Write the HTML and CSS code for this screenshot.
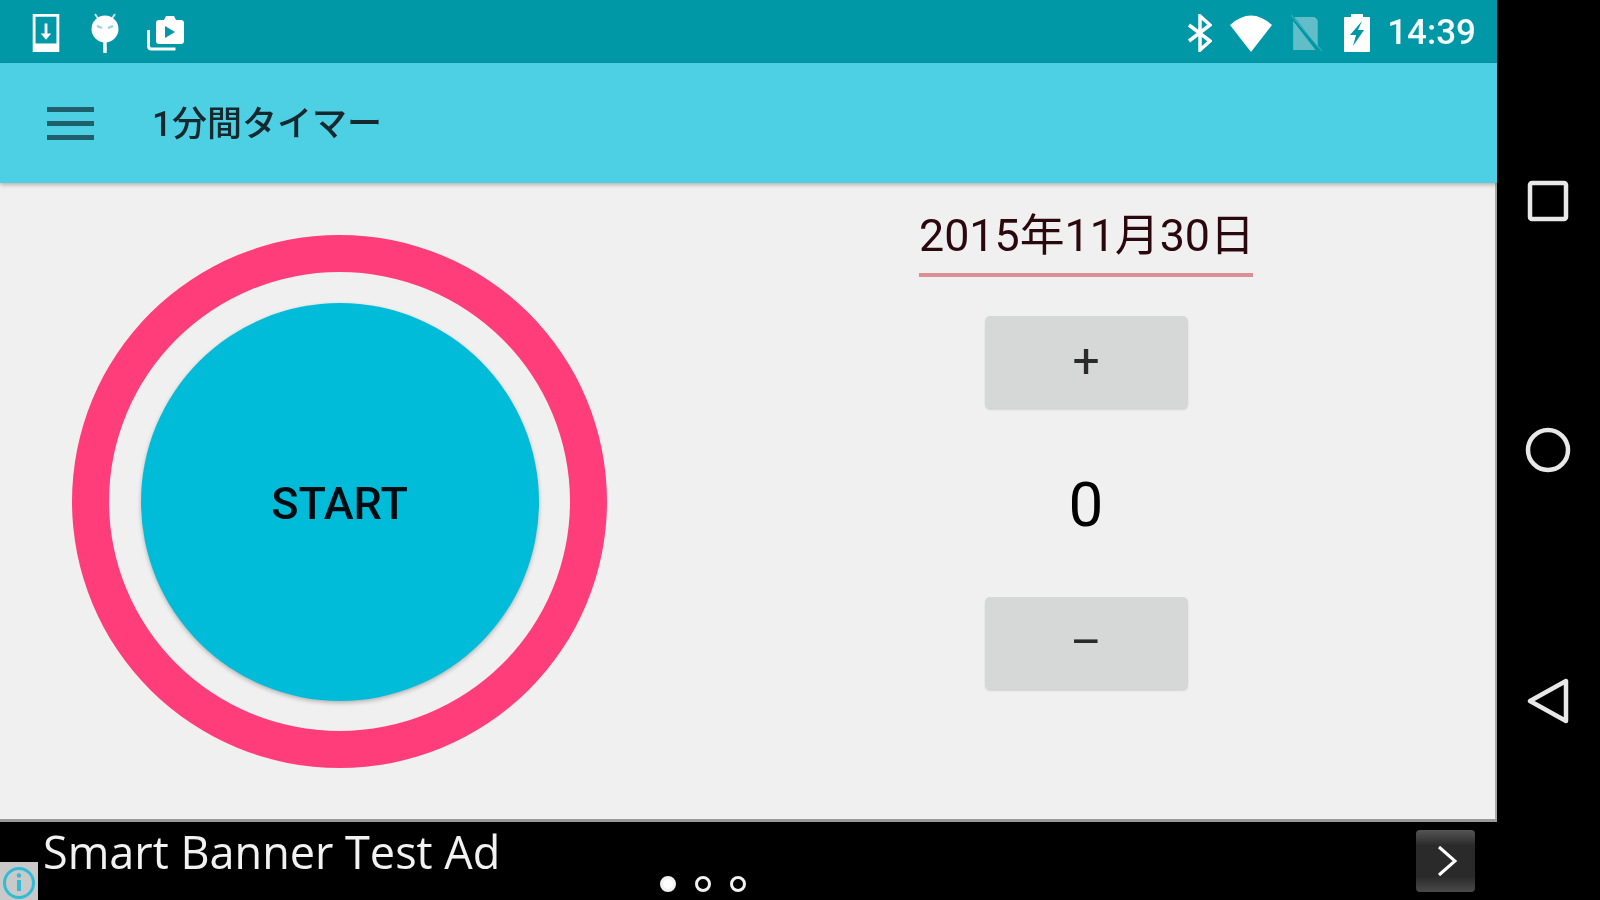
FILE: index.html
```html
<!DOCTYPE html>
<html lang="ja">
<head>
    <meta charset="UTF-8">
    <meta name="viewport" content="width=device-width, initial-scale=1.0">
    <title>1分間タイマー</title>
    <link rel="stylesheet" href="styles.css">
</head>
<body>
    <div class="device">
        <div class="screen">
            <div class="status-bar">
                <div class="status-left">
                    <svg class="icon-download" viewBox="0 0 28 40">
                        <path d="M1.500 1.500h25v37h-25z" fill="none" stroke="#fff" stroke-width="3"/>
                        <path d="M1 31h26v8H1z" fill="#fff"/>
                        <path d="M14 10v13" stroke="#fff" stroke-width="3"/>
                        <path d="M8.500 20.500h11L14 27z" fill="#fff"/>
                    </svg>
                    <svg class="icon-android" viewBox="0 0 28 40">
                        <path d="M4 1l4 6M24 1l-4 6" stroke="#fff" stroke-width="2" opacity=".75"/>
                        <circle cx="14" cy="16" r="13.500" fill="#fff"/>
                        <path d="M14 28v11" stroke="#fff" stroke-width="3.500" stroke-linecap="round"/>
                        <path d="M6 13l5 2M22 13l-5 2" stroke="#8fd3da" stroke-width="2"/>
                    </svg>
                    <svg class="icon-video" viewBox="0 0 38 36">
                        <path d="M1.500 15v16q0 3 3 3h24" fill="none" stroke="#fff" stroke-width="3"/>
                        <path d="M9 8q0-3 3-3h5l2-4h8l2 4h5q3 0 3 3v18q0 3-3 3H12q-3 0-3-3z" fill="#fff"/>
                        <path d="M18 11l10 6-10 6z" fill="#0097a7"/>
                    </svg>
                </div>
                <div class="status-right">
                    <svg class="icon-bt" viewBox="0 0 25 38">
                        <path d="M2 11l21 16-10 9V2l10 9L2 27" fill="none" stroke="#fff" stroke-width="3.500"/>
                    </svg>
                    <svg class="icon-wifi" viewBox="0 0 45 38" preserveAspectRatio="none">
                        <path d="M0 11Q22.500-8 45 11L22.500 38z" fill="#fff"/>
                    </svg>
                    <svg class="icon-sim" viewBox="0 0 29 38" preserveAspectRatio="none">
                        <path d="M3 3h19l3 3v26zM2 7l21 29H2z" fill="#fff" opacity=".38"/>
                        <path d="M0 1l29 36" stroke="#fff" stroke-width="1" opacity=".25"/>
                    </svg>
                    <svg class="icon-battery" viewBox="0 0 26 38">
                        <path d="M7 0h12v3h6q1 0 1 1v33q0 1-1 1H1q-1 0-1-1V4q0-1 1-1h6z" fill="#fff"/>
                        <path d="M18 7L6 21h6l-3 11 11-16h-6z" fill="#0097a7"/>
                    </svg>
                    <span class="status-time">14:39</span>
                </div>
            </div>
            <div class="app-bar">
                <div class="menu-icon">
                    <span></span>
                    <span></span>
                    <span></span>
                </div>
                <span class="app-title">1分間タイマー</span>
            </div>
            <div class="main-content">
                <div class="ring">
                    <div class="start-btn">START</div>
                </div>
                <div class="counter">
                    <div class="date">2015年11月30日</div>
                    <button class="step-btn">+</button>
                    <div class="count">0</div>
                    <button class="step-btn">–</button>
                </div>
            </div>
            <div class="ad-banner">
                <div class="ad-info">
                    <svg viewBox="0 0 38 38">
                        <circle cx="19" cy="21" r="14.500" fill="none" stroke="#2fbcd4" stroke-width="3"/>
                        <path d="M19 18v11" stroke="#2fbcd4" stroke-width="4"/>
                        <circle cx="19" cy="13.500" r="2.200" fill="#2fbcd4"/>
                    </svg>
                </div>
                <div class="ad-body">
                    <div class="ad-text">Smart Banner Test Ad</div>
                    <div class="ad-dots">
                        <span class="dot active"></span>
                        <span class="dot"></span>
                        <span class="dot"></span>
                    </div>
                </div>
                <div class="ad-next">
                    <svg viewBox="0 0 59 62">
                        <path d="M23 17l16 14-16 14" fill="none" stroke="#fff" stroke-width="3"/>
                    </svg>
                </div>
            </div>
        </div>
        <div class="nav-bar">
            <svg class="nav-icon" viewBox="0 0 46 46">
                <rect x="5" y="5" width="36" height="36" rx="2" fill="none" stroke="#e8e8e8" stroke-width="4.500"/>
            </svg>
            <svg class="nav-icon nav-home" viewBox="0 0 46 46">
                <circle cx="23" cy="23" r="20" fill="none" stroke="#e8e8e8" stroke-width="4.500"/>
            </svg>
            <svg class="nav-icon" viewBox="0 0 46 46">
                <path d="M5 23L41 3v40z" fill="none" stroke="#e8e8e8" stroke-width="4.500" stroke-linejoin="round"/>
            </svg>
        </div>
    </div>
</body>
</html>
```

FILE: styles.css
```css
* {
    box-sizing: border-box;
}
html, body {
    overflow: hidden;
}
body {
    margin: 0;
    background: #000;
    font-family: Roboto, "Noto Sans CJK JP", sans-serif;
}
.device {
    display: flex;
    width: 1600px;
    height: 900px;
    filter: blur(0.6px);
}
.screen {
    width: 1497px;
    display: flex;
    flex-direction: column;
}

/* status bar */
.status-bar {
    height: 63px;
    flex: none;
    display: flex;
    justify-content: space-between;
    align-items: center;
    padding: 2px 21px 0 32px;
    background: #0097a7;
    box-shadow: 0 -4px #0097a7, -4px 0 #0097a7, -4px -4px #0097a7;
}
.status-left, .status-right {
    display: flex;
    align-items: center;
}
.status-bar svg {
    display: block;
    height: 38px;
}
.icon-download, .icon-android {
    width: 28px;
}
.icon-android {
    margin-left: 31px;
}
.status-left .icon-android {
    height: 40px;
}
.icon-video {
    width: 38px;
    margin-left: 28px;
}
.status-left .icon-video {
    height: 36px;
}
.icon-bt {
    width: 25px;
}
.icon-wifi {
    width: 42px;
    margin-left: 18px;
}
.icon-sim {
    width: 31px;
    margin-left: 19px;
}
.icon-battery {
    width: 26px;
    margin-left: 22px;
}
.status-time {
    margin-left: 17px;
    color: #f4fbfc;
    font-size: 35px;
    font-weight: 500;
}

/* app bar */
.app-bar {
    height: 120px;
    flex: none;
    display: flex;
    align-items: center;
    padding-left: 47px;
    background: #4dd0e4;
    box-shadow: 0 2px 4px rgba(0, 0, 0, 0.25), -4px 0 #4dd0e4;
    position: relative;
}
.menu-icon {
    width: 47px;
    display: flex;
    flex-direction: column;
    gap: 9px;
}
.menu-icon span {
    height: 5px;
    background: #1f5f6c;
}
.app-title {
    margin-left: 58px;
    padding-bottom: 6px;
    color: #14282e;
    font-size: 35px;
    font-weight: 500;
}

/* timer */
.main-content {
    flex: 1;
    display: flex;
    align-items: flex-start;
    padding: 52px 0 0 72px;
    background: #f0f0f0;
    border-right: 2px solid #a8a8a8;
    box-shadow: -4px 0 #f0f0f0;
}
.ring {
    width: 535px;
    height: 533px;
    flex: none;
    display: flex;
    justify-content: center;
    align-items: center;
    border: 37px solid #ff3d7a;
    border-radius: 50%;
}
.start-btn {
    width: 398px;
    height: 398px;
    padding-top: 4px;
    display: flex;
    justify-content: center;
    align-items: center;
    border-radius: 50%;
    background: #00bcd9;
    box-shadow: 0 2px 4px rgba(0, 0, 0, 0.25);
    color: #000c12;
    font-size: 45px;
    font-weight: 500;
}
.counter {
    width: 334px;
    margin: -25px 0 0 312px;
    display: flex;
    flex-direction: column;
    align-items: center;
}
.date {
    width: 100%;
    height: 67px;
    margin-bottom: 39px;
    border-bottom: 4px solid #dc9094;
    color: #2a080e;
    font-size: 44.800px;
    line-height: 52px;
    white-space: nowrap;
}
.step-btn {
    width: 203px;
    height: 92px;
    border: none;
    border-radius: 5px;
    background: #d6d8d8;
    box-shadow: 0 2px 2px rgba(0, 0, 0, 0.12);
    color: #2a2a2a;
    font-family: inherit;
    font-size: 48px;
    padding: 0 0 3px;
}
.count {
    height: 189px;
    padding-top: 4px;
    display: flex;
    align-items: center;
    color: #000;
    font-size: 62px;
}

/* ad banner */
.ad-banner {
    height: 81px;
    flex: none;
    display: flex;
    background: #000;
    border-top: 3px solid #999;
    color: #f2f2f2;
}
.ad-info {
    width: 38px;
    height: 38px;
    align-self: flex-end;
    flex: none;
    background: #c9c9c9;
}
.ad-info svg {
    display: block;
}
.ad-body {
    flex: 1;
    padding: 4px 0 0 5px;
}
.ad-text {
    font-family: "Open Sans", sans-serif;
    font-size: 45px;
    line-height: 52px;
    white-space: nowrap;
}
.ad-dots {
    display: flex;
    gap: 19px;
    margin: -2px 0 0 617px;
}
.dot {
    width: 16px;
    height: 16px;
    border: 3px solid #f2f2f2;
    border-radius: 50%;
}
.dot.active {
    background: #fff;
}
.ad-next {
    width: 59px;
    height: 62px;
    margin: 8px 22px 0 0;
    flex: none;
    border-radius: 4px;
    background: linear-gradient(#555, #2a2a2a 25%, #2a2a2a 75%, #4a4a4a);
}
.ad-next svg {
    display: block;
}

/* nav */
.nav-bar {
    flex: 1;
    display: flex;
    flex-direction: column;
    align-items: center;
    padding: 178px 2px 0 0;
    gap: 205px;
    background: #000;
}
.nav-icon {
    width: 46px;
    height: 46px;
    flex: none;
}
.nav-home {
    margin-top: -2px;
}
```
